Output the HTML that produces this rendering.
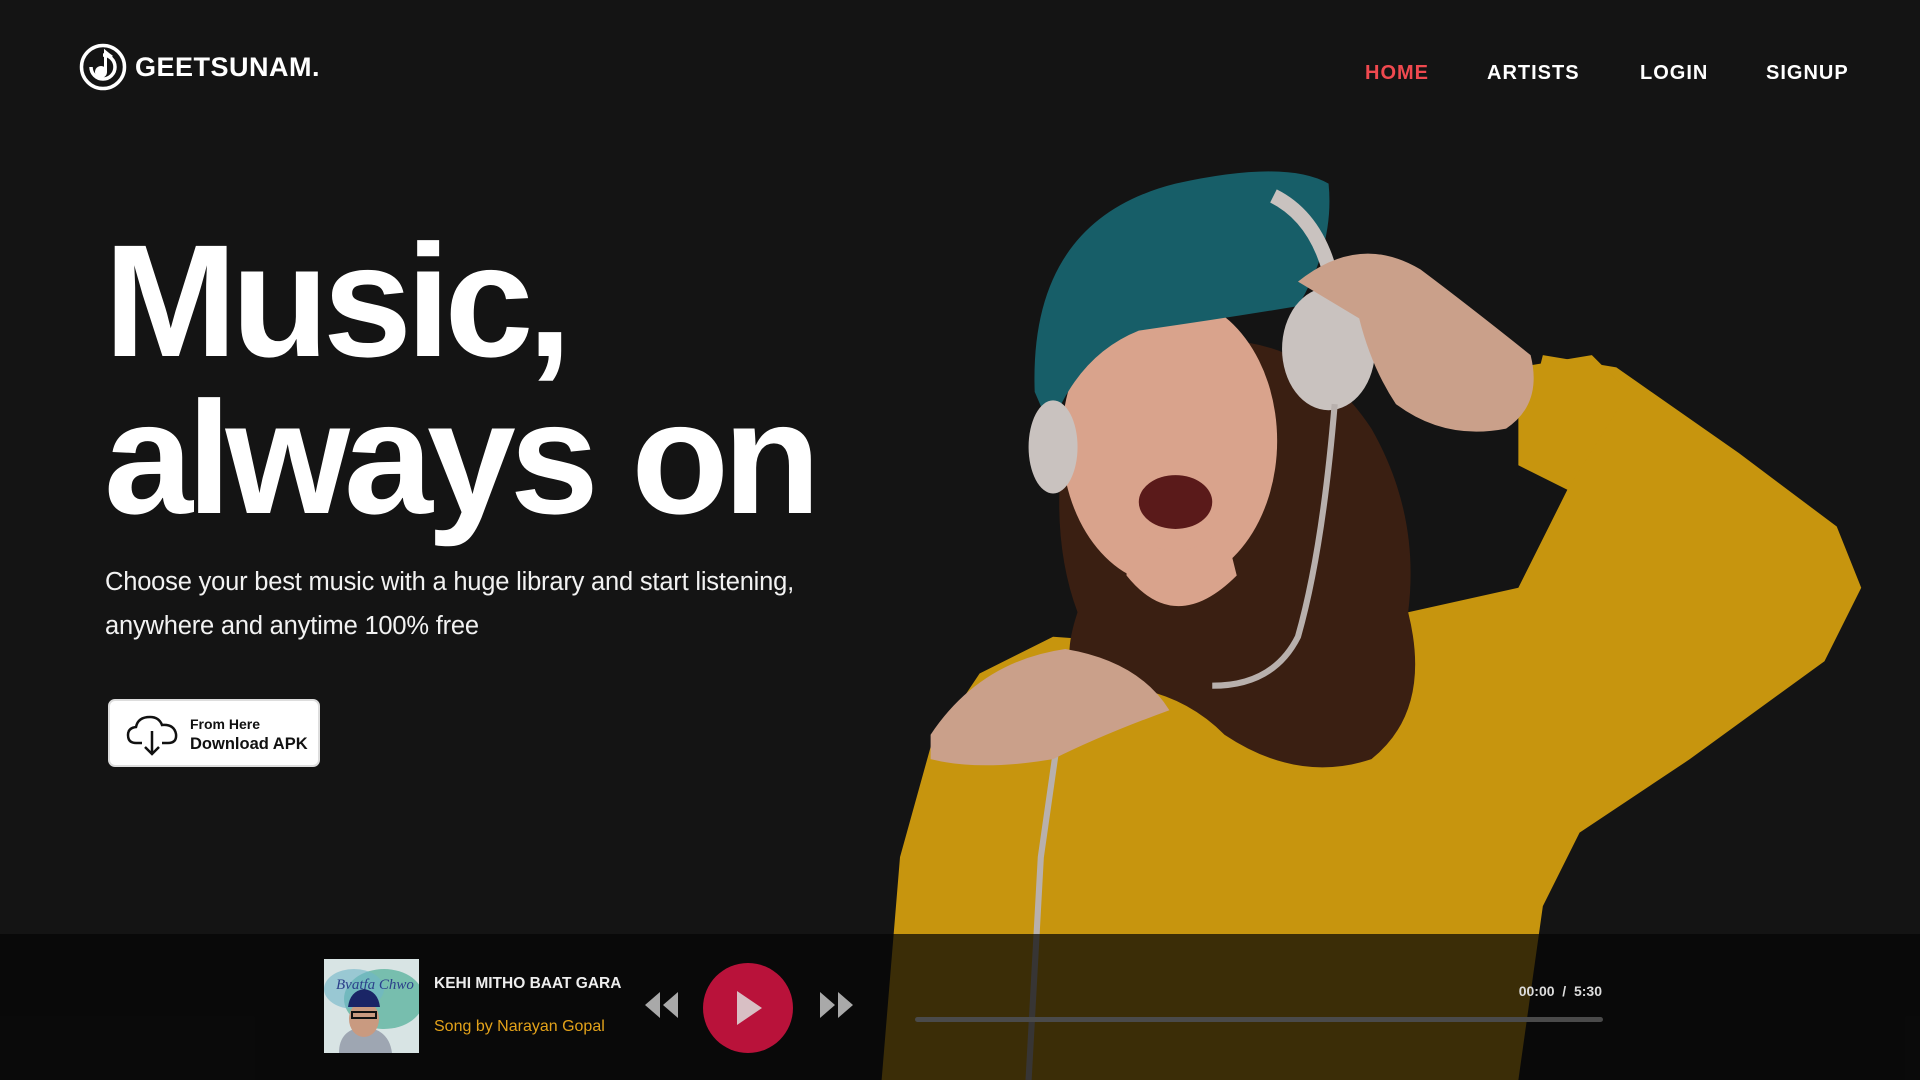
<!DOCTYPE html>
<html><head><meta charset="utf-8"><style>
*{margin:0;padding:0;box-sizing:border-box}
html,body{width:1920px;height:1080px;overflow:hidden;background:#141414;font-family:"Liberation Sans",sans-serif;color:#fff}
.abs{position:absolute}
.nav a{position:absolute;top:62px;font-size:20px;font-weight:bold;letter-spacing:1px;color:#fff;text-decoration:none}
h1{position:absolute;left:104px;top:222px;font-size:160px;line-height:157px;font-weight:bold;letter-spacing:-6px}
p.lead{position:absolute;left:105px;top:560px;font-size:25.5px;line-height:44px;color:#f2f2f2;letter-spacing:-.2px}
.btn{position:absolute;left:108px;top:699px;width:212px;height:68px;background:#fff;border-radius:7px;border:2px solid #ddd;color:#111}
.bar{position:absolute;left:0;top:934px;width:1920px;height:146px;background:rgba(6,6,6,0.72)}
</style></head><body>
<svg class="abs" style="left:0;top:0" width="1920" height="1080" viewBox="0 0 1568 882">
 <path d="M720,882 L735,700 L760,610 L800,550 L860,520 L930,525 L1000,540 L1090,520 L1150,500 L1240,480 L1280,400 L1250,330 L1260,290 L1320,300 L1420,370 L1500,430 L1520,480 L1490,540 L1380,620 L1290,680 L1260,740 L1240,882 Z" fill="#c7950e"/>
 <path d="M1240,300 L1300,290 L1330,320 L1280,400 L1240,380 Z" fill="#c7950e"/>
 <path d="M880,300 Q850,420 880,500 Q860,560 900,560 Q960,560 1000,600 Q1060,640 1120,620 Q1170,580 1150,500 Q1160,420 1120,350 Q1080,290 1020,280 Z" fill="#3a1f12"/>
 <ellipse cx="955" cy="360" rx="88" ry="118" fill="#d9a38c"/>
 <path d="M920,430 Q960,470 1000,430 L1010,470 Q960,520 920,470 Z" fill="#d9a38c"/>
 <ellipse cx="960" cy="410" rx="30" ry="22" fill="#5a1a1a"/>
 <path d="M845,320 Q840,180 960,150 Q1050,130 1085,150 Q1090,200 1060,250 Q1000,260 930,270 Q880,290 858,350 Z" fill="#175e68"/>
 <ellipse cx="1085" cy="285" rx="38" ry="50" fill="#c9c2bf"/>
 <ellipse cx="860" cy="365" rx="20" ry="38" fill="#c9c2bf"/>
 <path d="M1040,160 Q1080,180 1090,240" stroke="#c9c2bf" stroke-width="12" fill="none"/>
 <path d="M1090,330 Q1080,450 1060,520 Q1040,560 990,560 M870,560 L850,700 L840,882" stroke="#b8b0ad" stroke-width="5" fill="none"/>
 <path d="M1060,230 Q1110,190 1160,220 Q1200,250 1250,290 Q1260,330 1230,350 Q1180,360 1140,330 Q1120,300 1110,260 Z" fill="#caa08a"/>
 <path d="M760,600 Q800,540 870,530 Q930,540 955,580 Q900,600 860,620 Q800,630 760,620 Z" fill="#caa08a"/>
</svg>

<svg class="abs" style="left:79px;top:43px" width="48" height="48" viewBox="0 0 48 48">
 <circle cx="24" cy="24" r="21.5" fill="none" stroke="#fff" stroke-width="3.5"/>
 <path d="M12,24 A12,12 0 1,0 24,12" fill="none" stroke="#fff" stroke-width="3.5"/>
 <circle cx="22" cy="29" r="6" fill="#fff"/>
 <path d="M26.5,29 V9 Q30,12 33,14" stroke="#fff" stroke-width="3" fill="none"/>
</svg>
<div class="abs" style="left:135px;top:52px;font-size:27px;font-weight:bold;letter-spacing:.5px">GEETSUNAM.</div>

<div class="nav">
 <a style="left:1365px;color:#f0494f">HOME</a>
 <a style="left:1487px">ARTISTS</a>
 <a style="left:1640px">LOGIN</a>
 <a style="left:1766px">SIGNUP</a>
</div>

<h1>Music,<br>always on</h1>
<p class="lead">Choose your best music with a huge library and start listening,<br>anywhere and anytime 100% free</p>

<div class="btn">
 <svg class="abs" style="left:16px;top:12px" width="54" height="44" viewBox="0 0 54 44">
  <path d="M16,30 H10 Q2,30 2,22 Q2,15 10,14 Q12,4 24,4 Q33,4 36,12 Q48,11 50,21 Q51,30 42,30 H36" fill="none" stroke="#111" stroke-width="2.5"/>
  <path d="M26,18 V41 M19,34 L26,41 L33,34" fill="none" stroke="#111" stroke-width="2.5"/>
 </svg>
 <div class="abs" style="left:80px;top:15px;font-size:14px;font-weight:bold">From Here</div>
 <div class="abs" style="left:80px;top:34px;font-size:16.5px;font-weight:bold">Download APK</div>
</div>

<div class="bar"></div>
<svg class="abs" style="left:324px;top:959px" width="95" height="94" viewBox="0 0 95 94">
 <rect width="95" height="94" fill="#d8e4e4"/>
 <ellipse cx="60" cy="40" rx="40" ry="30" fill="#4fae97" opacity=".7"/>
 <ellipse cx="30" cy="30" rx="30" ry="20" fill="#6fb6c8" opacity=".6"/>
 <text x="12" y="30" font-family="Liberation Serif" font-style="italic" font-size="15" fill="#2b3f8a">Bvatfa Chwo</text>
 <path d="M15,94 Q15,70 40,68 Q65,70 68,94 Z" fill="#9ea6b2"/>
 <ellipse cx="40" cy="60" rx="15" ry="18" fill="#c99a80"/>
 <path d="M24,48 Q26,32 40,30 Q54,32 56,48 Z" fill="#1a2566"/>
 <rect x="28" y="53" width="24" height="6" fill="none" stroke="#111" stroke-width="2"/>
</svg>
<div class="abs" style="left:434px;top:975px;font-size:15.5px;font-weight:bold;color:#eee">KEHI MITHO BAAT GARA</div>
<div class="abs" style="left:434px;top:1018px;font-size:16px;color:#e3a21a">Song by Narayan Gopal</div>
<svg class="abs" style="left:642px;top:990px" width="40" height="30" viewBox="0 0 40 30"><path d="M18,2 L3,15 L18,28 Z M36,2 L21,15 L36,28 Z" fill="#a9a9a9"/></svg>
<svg class="abs" style="left:702px;top:962px" width="92" height="92" viewBox="0 0 92 92"><circle cx="46" cy="46" r="45" fill="#b9123a"/><path d="M35,29 L60,46 L35,63 Z" fill="#d8bfc4"/></svg>
<svg class="abs" style="left:816px;top:990px" width="40" height="30" viewBox="0 0 40 30"><path d="M4,2 L19,15 L4,28 Z M22,2 L37,15 L22,28 Z" fill="#a9a9a9"/></svg>
<div class="abs" style="left:1500px;top:983px;font-size:14px;font-weight:bold;color:#ddd;width:102px;text-align:right">00:00 &nbsp;/&nbsp; 5:30</div>
<div class="abs" style="left:915px;top:1017px;width:688px;height:5px;border-radius:3px;background:#4a4a4a"></div>
</body></html>
